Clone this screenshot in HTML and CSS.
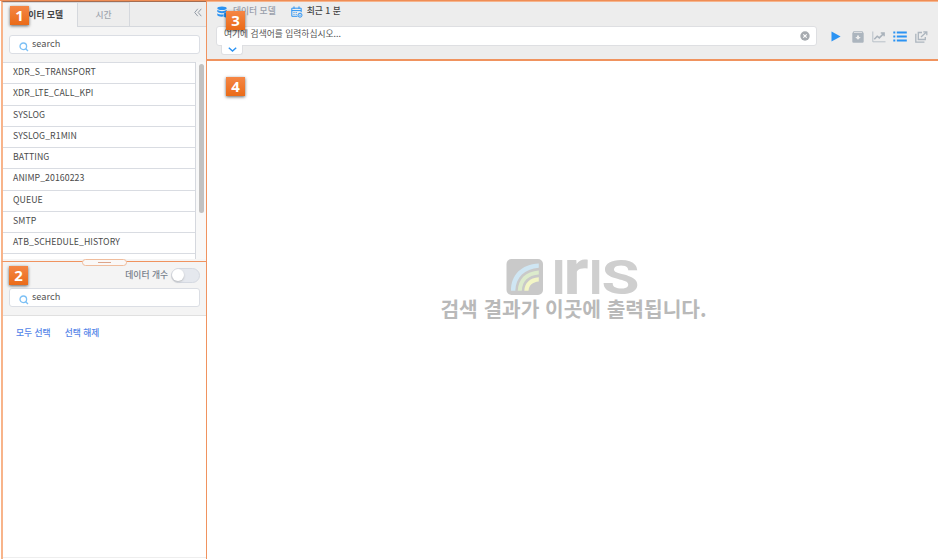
FILE: index.html
```html
<!DOCTYPE html>
<html lang="ko">
<head>
<meta charset="utf-8">
<title>IRIS</title>
<link rel="stylesheet" href="styles.css">
</head>
<body>
<div class="app">
  <aside class="side">
    <section class="models">
      <span class="badge b1">1</span>
      <nav class="tabs">
        <div class="tab active">데이터 모델</div>
        <div class="tab">시간</div>
        <svg class="collapse" width="8" height="9" viewBox="0 0 8 9"><path d="M3.8.8.7 4.5l3.1 3.7M7.3.8 4.2 4.5l3.1 3.7"/></svg>
      </nav>
      <div class="search">
        <svg width="10" height="10" viewBox="0 0 10 10"><circle cx="4.3" cy="4.3" r="3.3"/><path d="M6.7 6.7 9 9"/></svg>
        <span>search</span>
      </div>
      <div class="listwrap">
        <ul class="list">
          <li>XDR_S_TRANSPORT</li>
          <li>XDR_LTE_CALL_KPI</li>
          <li>SYSLOG</li>
          <li>SYSLOG_R1MIN</li>
          <li>BATTING</li>
          <li>ANIMP_20160223</li>
          <li>QUEUE</li>
          <li>SMTP</li>
          <li>ATB_SCHEDULE_HISTORY</li>
          <li></li>
        </ul>
        <div class="track"><div class="thumb"></div></div>
      </div>
    </section>
    <section class="fields">
      <span class="handle"></span>
      <span class="badge b2">2</span>
      <div class="fieldhead">
        <div class="count"><span>데이터 개수</span><span class="toggle"></span></div>
        <div class="search low">
          <svg width="10" height="10" viewBox="0 0 10 10"><circle cx="4.3" cy="4.3" r="3.3"/><path d="M6.7 6.7 9 9"/></svg>
          <span>search</span>
        </div>
      </div>
      <div class="links"><a>모두 선택</a><a>선택 해제</a></div>
      <div class="foot"></div>
    </section>
  </aside>
  <main class="main">
    <header class="query">
      <span class="badge b3">3</span>
      <div class="crumbs">
        <svg class="db" width="12" height="12" viewBox="0 0 12 12"><ellipse cx="5" cy="2.2" rx="4.7" ry="1.8"/><path d="M.3 3.8c1.5 1.8 7.9 1.8 9.4 0v1.900c-1.5 1.900-7.900 1.900-9.400 0zM.3 7.200c1.200 1.300 3.800 1.600 5.600 1.300l.8 2.100C3.800 11 1 10.500.3 9.300z"/><circle cx="9" cy="9" r="2.500"/></svg>
        <span class="muted">데이터 모델</span>
        <svg class="cal" width="12" height="12" viewBox="0 0 12 12"><path d="M6.500 10.300H.8V2.200h9.400v4M.8 4.600h9.400M3 .4v2.300M8 .4v2.300M2.500 6.500h1M4.700 6.500h1M2.500 8.400h1M4.700 8.400h1"/><circle cx="9" cy="9.200" r="2"/><path d="M8.300 9.200h1.400"/></svg>
        <span class="range">최근 1 분</span>
      </div>
      <div class="bar">
        <div class="input">
          <span>여기에 검색어를 입력하십시오...</span>
          <svg width="10" height="10" viewBox="0 0 10 10"><circle cx="5" cy="5" r="4.700" fill="#a7abb0"/><path d="m3.300 3.300 3.400 3.400m0-3.400L3.300 6.700" stroke="#fff" stroke-width="1.100"/></svg>
          <div class="expand"><svg width="9" height="5" viewBox="0 0 9 5"><path d="m.8.7 3.700 3.300L8.200.7"/></svg></div>
        </div>
        <div class="tools">
          <svg width="10" height="11" viewBox="0 0 10 11"><path d="M.5.5 9.600 5.500.5 10.500z" fill="#2b93f3"/></svg>
          <svg width="12" height="12" viewBox="0 0 12 12"><path fill="#acb5be" fill-rule="evenodd" d="M1.500.3h9l1.200 1.900v8.300q0 1.200-1.200 1.200h-9Q.3 11.700.3 10.500V2.200zM1.600 2h8.800l-.6-.8H2.200zM5 4.500v1.400H3.200L6 8.800l2.800-2.900H7V4.500z"/></svg>
          <svg width="14" height="12" viewBox="0 0 14 12"><path d="M.8.5v10.300h12.700" fill="none" stroke="#b8c0c8" stroke-width="1"/><path d="m2.300 8.200 2.900-3 2.100 1.700 4-4M8.800 2h3.300v3.200" fill="none" stroke="#a9b2bb" stroke-width="1.500"/></svg>
          <svg width="14" height="11" viewBox="0 0 14 11"><path d="M.3 1.500h2M.3 5.500h2M.3 9.500h2M3.800 1.500h10M3.800 5.500h10M3.800 9.500h10" stroke="#2b93f3" stroke-width="1.900"/></svg>
          <svg width="13" height="12" viewBox="0 0 13 12"><path d="M7 1.500H3.300v7h7V6M1.500 3.300H.8v7.900h8V10.500M6 6l5.500-5M8.300.8h3.500v3.500" fill="none" stroke="#acb5be" stroke-width="1.300"/></svg>
        </div>
      </div>
    </header>
    <section class="result">
      <span class="badge b4">4</span>
      <div class="empty">
        <svg class="logo" width="134" height="38" viewBox="0 0 134 38">
          <rect x=".5" y="1" width="36.500" height="36" rx="5" fill="#c9c9c9"/>
          <path d="M5 32.800C5 17 15 6.500 32.800 5.500v4.300C18.500 11 10 19 9.300 32.800z" fill="#cfe6f3"/>
          <path d="M11.800 32.800C12.300 21 19.500 13.500 32.800 12.500v4C22 17.500 16.500 22.500 15.800 32.800z" fill="#dcebcc"/>
          <path d="M18.300 32.800C18.800 25 23.500 20 32.800 19.200v4.300c-6.300.7-9.800 3.700-10.300 9.300z" fill="#f3f6c6"/>
          <g class="word"><text x="45.500" y="36.300" font-size="49">I</text><text x="57.500" y="36.300" font-size="65" textLength="25" lengthAdjust="spacingAndGlyphs">r</text><text x="82.500" y="36.300" font-size="49">I</text><text x="95.500" y="36" font-size="48.500" textLength="38" lengthAdjust="spacingAndGlyphs">S</text></g>
        </svg>
        <p>검색 결과가 이곳에 출력됩니다.</p>
      </div>
    </section>
  </main>
</div>
</body>
</html>
```
FILE: styles.css
```css
* { box-sizing: border-box; }
body { margin: 0; background: #fff; font-family: "Noto Sans CJK KR", sans-serif; font-size: 8.750px; color: #4a4a4a; overflow: hidden; }
svg { display: block; flex: none; }
.app { display: flex; width: 938px; height: 559px; border-top: 1px solid #ef8d55; }
.side { width: 207px; flex: none; display: flex; flex-direction: column; border-left: 1px solid #fff; border-right: 1px solid #f0935f; }
.models { position: relative; height: 261px; border-left: 2px solid #f8b48a; border-top: 1px solid #a66d50; border-bottom: 1px solid #f0935f; background: #f5f5f5; }
.tabs { display: flex; height: 25px; border-bottom: 1px solid #d5d8dd; background: #ededed; position: relative; }
.tab { height: 24px; width: 52px; line-height: 24px; text-align: center; color: #a0a5ae; font-weight: 500; border-right: 1px solid #d5d8dd; border-top: 1px solid #d5d8dd; }
.tab.active { width: 75px; height: 25px; background: #f5f5f5; color: #444; font-weight: 700; text-align: right; padding-right: 14px; }
.collapse { position: absolute; right: 4px; top: 6px; fill: none; stroke: #929aa5; stroke-width: 1; }
.search { display: flex; align-items: center; margin: 8px 6px 0; height: 19px; background: #fff; border: 1px solid #dbdee4; border-radius: 3px; padding-left: 9px; gap: 3px; font-size: 9.250px; color: #555; }
.search svg { fill: none; stroke: #7cc0f5; stroke-width: 1.300; margin-top: 4px; }
.search span { line-height: 16px; margin-top: -3px; }
.listwrap { display: flex; margin-top: 8px; height: 197px; }
.list { margin: 0; padding: 0; list-style: none; width: 194px; height: 197px; overflow: hidden; background: #fff; border-right: 1px solid #d5d8de; }
.list li { height: 21.250px; border-top: 1px solid #d9dce2; padding-left: 10px; line-height: 18px; letter-spacing: .06px; }
.track { flex: 1; background: #f8f8f8; padding: 2px 2px 0 3px; }
.thumb { width: 5px; height: 149px; border-radius: 3px; background: #c1c1c1; }
.fields { position: relative; flex: 1; display: flex; flex-direction: column; border-left: 2px solid #f8b48a; }
.handle { position: absolute; left: 79px; top: -3px; width: 45px; height: 7px; border: 1px solid #f0bd9d; border-radius: 4px; background: #faf8f7; display: flex; justify-content: center; align-items: center; }
.handle::after { content: ""; width: 13px; height: 1px; background: #dca48a; }
.fieldhead { height: 54px; background: #f4f4f4; border-bottom: 1px solid #e0e0e0; padding-top: 6px; }
.count { display: flex; justify-content: flex-end; align-items: center; height: 15px; padding-right: 6px; gap: 3px; color: #77808b; font-weight: 500; }
.count > span:first-child { line-height: 13px; margin-top: -2px; }
.toggle { width: 29px; height: 15px; border: 1px solid #d5d9e1; border-radius: 8px; background: #e5e8ee; }
.toggle::after { content: ""; display: block; width: 12px; height: 12px; margin: 0; border-radius: 50%; background: #fff; box-shadow: 0 1px 2px #9999; }
.search.low { margin-top: 5px; }
.links { display: flex; gap: 14px; padding: 10px 0 0 13px; color: #5384e8; font-weight: 500; line-height: 13px; }
.foot { margin-top: auto; height: 2px; border-top: 1px solid #eee; }
.main { flex: 1; min-width: 0; display: flex; flex-direction: column; }
.query { position: relative; height: 60px; background: #ededed; border-top: 1px solid #f6b48c; border-bottom: 2px solid #f0935f; padding: 1px 0 0 9px; }
.crumbs { display: flex; align-items: center; height: 15px; line-height: 13px; }
.db { fill: #2b93f3; margin: 3px 4px 0 1px; }
.muted { color: #9a9fab; font-weight: 500; margin-right: 15px; }
.cal { fill: none; stroke: #2b93f3; margin: 3px 4px 0 0; }
.range { color: #444; font-weight: 500; }
.bar { display: flex; align-items: flex-start; margin-top: 8px; }
.input { position: relative; display: flex; justify-content: space-between; width: 601px; height: 20px; background: #fff; border: 1px solid #dedfe2; border-radius: 3px; padding: 4px 6px 0 7px; color: #555; }
.input > span { line-height: 13px; margin-top: -4px; }
.expand { position: absolute; left: 4px; top: 18px; width: 22px; height: 10px; background: #fff; border: 1px solid #dedfe2; border-top: 0; border-radius: 0 0 3px 3px; padding: 2px 0 0 6px; }
.expand path { fill: none; stroke: #2b93f3; stroke-width: 1.400; }
.tools { display: flex; align-items: center; height: 21px; margin-left: 14px; gap: 8px; }
.tools svg:first-child { margin-right: 3px; }
.tools svg:nth-child(4) { margin-left: -1px; }
.result { position: relative; flex: 1; }
.empty { display: flex; flex-direction: column; align-items: center; padding: 197px 0 0 2px; }
.logo { overflow: visible; margin-right: 2px; }
.word { fill: #cfcfcf; font-family: Roboto, sans-serif; font-weight: 700; }
.empty p { margin: 0; font-size: 20.300px; line-height: 24px; font-weight: 700; color: #b9b9b9; white-space: nowrap; }
.badge { position: absolute; z-index: 5; width: 19px; height: 19px; background: linear-gradient(#f58645, #ea6b18); box-shadow: 0 1px 3px #0009; color: #fff; font: 700 15px/19px "Noto Sans", sans-serif; text-align: center; }
.b1 { left: 7px; top: 4px; }
.b2 { left: 6px; top: 4px; }
.b3 { left: 19px; top: 9px; }
.b4 { left: 19px; top: 16px; }
```
